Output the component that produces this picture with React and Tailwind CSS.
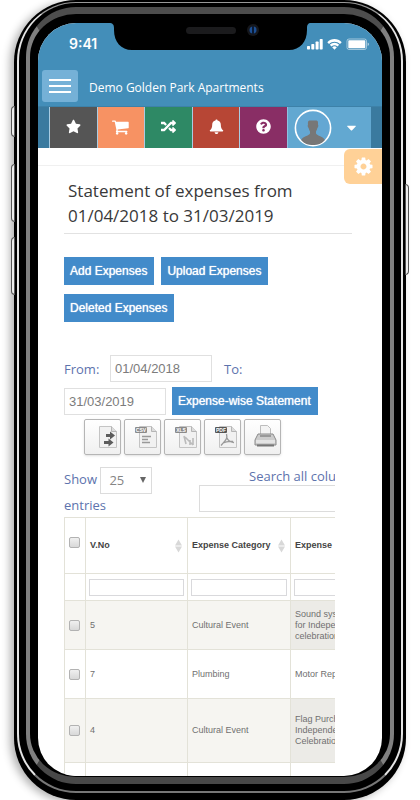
import { FaStar, FaRandom, FaQuestionCircle, FaCaretDown } from 'react-icons/fa';

function CartIcon() {
    return (
        <svg width="18" height="18" viewBox="0 0 1792 1792" fill="currentColor" aria-hidden="true">
            <path d="M640 1536q0 52-38 90t-90 38-90-38-38-90 38-90 90-38 90 38 38 90zm896 0q0 52-38 90t-90 38-90-38-38-90 38-90 90-38 90 38 38 90zm128-1088v512q0 24-16.5 42.5t-40.5 21.5l-1044 122q13 60 13 70 0 16-24 64h920q26 0 45 19t19 45-19 45-45 19h-1024q-26 0-45-19t-19-45q0-11 8-31.5t16-36 21.5-40 15.5-29.5l-177-823h-204q-26 0-45-19t-19-45 19-45 45-19h256q16 0 28.5 6.5t19.5 15.5 13 24.5 8 26 5.5 29.5 4.5 26h1201q26 0 45 19t19 45z" />
        </svg>
    );
}

function BellIcon({ size }) {
    return (
        <svg width={size} height={size} viewBox="0 0 16 16" fill="currentColor" aria-hidden="true">
            <path d="M8 0.500C8.700 0.500 9.200 1 9.100 1.700C11.500 2.200 12.600 4.200 12.600 6.200C12.600 9.500 13.500 11 15.200 12.300C15.200 13 14.700 13.400 14.100 13.400H1.900C1.300 13.400 0.800 13 0.800 12.300C2.500 11 3.400 9.500 3.400 6.200C3.400 4.200 4.500 2.200 6.900 1.700C6.800 1 7.300 0.500 8 0.500ZM6 14H10C10 15.200 9.100 16 8 16C6.900 16 6 15.200 6 14Z" />
        </svg>
    );
}

function CogIcon({ size }) {
    return (
        <svg width={size} height={size} viewBox="0 0 1792 1792" fill="currentColor" aria-hidden="true">
            <path d="M1152 896q0-106-75-181t-181-75-181 75-75 181 75 181 181 75 181-75 75-181zm512-109v222q0 12-8 23t-20 13l-185 28q-19 54-39 91 35 50 107 138 10 12 10 25t-9 23q-27 37-99 108t-94 71q-12 0-26-9l-138-108q-44 23-91 38-16 136-29 186-7 28-36 28h-222q-14 0-24.5-8.5t-11.5-21.5l-28-184q-49-16-90-37l-141 107q-10 9-25 9-14 0-25-11-126-114-165-168-7-10-7-23 0-12 8-23 15-21 51-66.5t54-70.5q-27-50-41-99l-183-27q-13-2-21-12.5t-8-23.5v-222q0-12 8-23t19-13l186-28q14-46 39-92-40-57-107-138-10-12-10-24 0-10 9-23 26-36 98.5-107.5t94.5-71.5q13 0 26 10l138 107q44-23 91-38 16-136 29-186 7-28 36-28h222q14 0 24.5 8.5t11.5 21.5l28 184q49 16 90 37l142-107q9-9 24-9 13 0 25 10 129 119 165 170 7 8 7 22 0 12-8 23-15 21-51 66.5t-54 70.5q26 50 41 98l183 28q13 2 21 12.5t8 23.5z" />
        </svg>
    );
}

const shortcuts = [
    { label: 'Favourites', icon: FaStar, color: 'bg-[#555555]' },
    { label: 'Cart', icon: CartIcon, color: 'bg-[#f79263]' },
    { label: 'Switch', icon: FaRandom, color: 'bg-[#2e8965]' },
    { label: 'Notifications', icon: BellIcon, color: 'bg-[#b74635]' },
    { label: 'Help', icon: FaQuestionCircle, color: 'bg-[#892e65]' },
];

const expenses = [
    { no: '5', category: 'Cultural Event', expense: 'Sound system\nfor Independence\ncelebration', height: 'h-[49px]' },
    { no: '7', category: 'Plumbing', expense: 'Motor Repairing', height: 'h-[49px]' },
    { no: '4', category: 'Cultural Event', expense: 'Flag Purchase\nIndependence\nCelebration', height: 'h-16' },
    { no: '', category: '', expense: '', height: 'h-16' },
];

function Notch() {
    return (
        <svg className="absolute top-0 left-1/2 -translate-x-1/2" width="202" height="28" viewBox="0 0 202 28" aria-hidden="true">
            <path d="M0 0H202C199 0 198 2 198 5V7C198 19 191 27 180 27H23C12 27 5 19 5 7V5C5 2 4 0 0 0Z" fill="#000" />
            <rect x="77" y="4" width="50" height="7" rx="3.5" fill="#1b1b1d" />
            <circle cx="144" cy="7" r="6" fill="#15171c" />
            <circle cx="144" cy="7" r="3.5" fill="#1c4f94" />
            <rect x="143" y="3" width="2" height="8" fill="#0b1a33" />
        </svg>
    );
}

function StatusBar() {
    return (
        <div className="flex h-[47px] items-start justify-between pt-[11px] pr-3 pl-[31px] font-['Inter',sans-serif] text-sm font-semibold text-white">
            <span>9:41</span>
            <svg className="mt-1" width="63" height="12" viewBox="0 0 63 12" fill="#fff" aria-hidden="true">
                <rect x="0" y="8" width="3" height="3.500" rx="0.700" />
                <rect x="4.300" y="6" width="3" height="5.500" rx="0.700" />
                <rect x="8.600" y="3.500" width="3" height="8" rx="0.700" />
                <rect x="12.700" y="1" width="3" height="10.500" rx="0.700" />
                <path d="M20.300 4.300C24.300 -0.100 30.700 -0.100 34.700 4.300L33 6C29.800 2.900 25.200 2.900 22 6Z" />
                <path d="M22.800 6.800C25.500 4.100 29.500 4.100 32.200 6.800L30.500 8.500C28.600 6.900 26.400 6.900 24.500 8.500Z" />
                <path d="M25.200 9.300C26.700 8 28.300 8 29.800 9.300L27.500 11.700Z" />
                <rect x="40" y="1" width="19.500" height="10.500" rx="2" fill="none" stroke="#fff" strokeOpacity="0.5" />
                <rect x="41.300" y="2.300" width="17" height="8" rx="0.800" />
                <path d="M60.600 4.500C62.500 5 62.500 7.500 60.600 8Z" fillOpacity="0.6" />
            </svg>
        </div>
    );
}

function Avatar() {
    return (
        <svg width="38" height="38" viewBox="0 0 38 38" aria-hidden="true">
            <circle cx="19" cy="19" r="17.600" fill="#64a7d3" stroke="#fff" strokeWidth="1.600" />
            <path d="M14 15.500C13.600 10 15.500 11.600 19 11.600C22.500 11.600 24.400 10 24 15.500C24.600 16 24.300 18.500 23.400 19C23 21 22.200 22 22 22.600V24.600C23 27 29.500 27.500 30.800 31C27 35.500 23 36 19 36C15 36 11 35.500 7.200 31C8.500 27.500 15 27 16 24.600V22.600C15.800 22 15 21 14.600 19C13.700 18.500 13.400 16 14 15.500Z" fill="#777" />
        </svg>
    );
}

function PageOutline() {
    return (
        <>
            <path d="M7.500 3.500H19.500L24.500 8.500V24.500H7.500Z" fill="#f1f1f1" stroke="#c4c4c4" />
            <path d="M19.500 3.500V8.500H24.500" fill="#ddd" stroke="#b5b5b5" />
        </>
    );
}

function FormatTag({ children, fill = '#8a8a8a' }) {
    return (
        <>
            <rect x="3" y="4" width="12" height="6" rx="1" fill={fill} />
            <text x="9" y="9" textAnchor="middle" fontSize="5" fontWeight="700" fill="#fff" fontFamily="Liberation Sans, sans-serif">{children}</text>
        </>
    );
}

const exportIcons = [
    {
        label: 'Copy',
        art: (
            <>
                <PageOutline />
                <path d="M14 11H18V8.500L23 12.500L18 16.500V14H14ZM12 18H16.500V15.500L21.500 19.500L16.500 23.500V21H12Z" fill="#5c5c5c" />
            </>
        ),
    },
    {
        label: 'CSV',
        art: (
            <>
                <PageOutline />
                <FormatTag>CSV</FormatTag>
                <path d="M10 13.500H19M10 16.500H16M10 19.500H18" stroke="#999" strokeWidth="1.500" />
            </>
        ),
    },
    {
        label: 'Excel',
        art: (
            <>
                <PageOutline />
                <FormatTag>XLS</FormatTag>
                <path d="M12 13L14 21M13 14L21 22M18 22V17M21 22V15" fill="none" stroke="#bbb" strokeWidth="1.600" />
            </>
        ),
    },
    {
        label: 'PDF',
        art: (
            <>
                <PageOutline />
                <FormatTag fill="#555">PDF</FormatTag>
                <path d="M14.500 11C15.500 15 15 16 9 22.500M15 15C16 18 18 19 22 19.500M11 20C14 18.500 17 18 21 18.500" fill="none" stroke="#999" strokeWidth="1.300" />
            </>
        ),
    },
    {
        label: 'Print',
        art: (
            <>
                <path d="M8.500 13V2.500H15.500L18.500 5.500V13Z" fill="#f3f3f3" stroke="#bdbdbd" />
                <path d="M6 11H21L24 17V22H3V17Z" fill="#ccc" stroke="#8b8b8b" />
                <path d="M8 13H19" stroke="#666" />
                <rect x="4" y="17" width="19" height="3" fill="#e4e4e4" />
                <path d="M5 22.500H22" stroke="#777" strokeWidth="2" />
            </>
        ),
    },
];

function BlueButton({ children }) {
    return (
        <button type="button" className="h-7 bg-[#428bca] pr-[7px] pl-1.5 text-xs whitespace-nowrap text-white [text-shadow:0_0_1px_#fff]">
            {children}
        </button>
    );
}

function Checkbox({ label }) {
    return (
        <input
            type="checkbox"
            aria-label={label}
            className="ml-1 block size-[11px] appearance-none rounded-xs border border-[#b2b2b2] bg-linear-to-b from-[#f0f0f0] to-[#d8d8d8]"
        />
    );
}

function SortIcon() {
    return (
        <svg className="mr-0.5 shrink-0" width="7" height="14" viewBox="0 0 7 14" fill="#d8d8d8" aria-hidden="true">
            <path d="M3.500 0.500L7 6.500H0ZM3.500 13.500L7 7.500H0Z" />
        </svg>
    );
}

function ExpenseTable() {
    const headings = ['V.No', 'Expense Category', 'Expense'];

    return (
        <table className="w-[329px] table-fixed border-collapse text-[9px] leading-[11px] text-[#707070] [&_td]:border [&_td]:border-[#e3e2d8] [&_th]:border [&_th]:border-[#e3e2d8]">
            <colgroup>
                <col className="w-[21px]" />
                <col className="w-[102px]" />
                <col className="w-[103px]" />
                <col className="w-[103px]" />
            </colgroup>
            <thead>
                <tr className="h-14 text-left text-[#444]">
                    <th className="pb-1.5"><Checkbox label="Select all" /></th>
                    {headings.map((heading) => (
                        <th key={heading} className="pr-[3px] pl-1">
                            <div className="flex items-center justify-between whitespace-nowrap">
                                {heading}
                                <SortIcon />
                            </div>
                        </th>
                    ))}
                </tr>
                <tr className="h-[27px]">
                    <td />
                    {headings.map((heading) => (
                        <td key={heading} className="px-[3px]">
                            <input aria-label={`Filter ${heading}`} className="block h-[17px] w-full border border-[#d9d9dc] bg-white" />
                        </td>
                    ))}
                </tr>
            </thead>
            <tbody>
                {expenses.map((row) => (
                    <tr key={row.no} className={`odd:bg-[#f6f5f1] last:bg-white ${row.height}`}>
                        <td>{row.no && <Checkbox label={`Select voucher ${row.no}`} />}</td>
                        <td className="px-1">{row.no}</td>
                        <td className="px-1">{row.category}</td>
                        <td className={row.no === '7' || !row.no ? 'px-1' : 'bg-[#ecebe7] px-1 whitespace-pre-line'}>{row.expense}</td>
                    </tr>
                ))}
            </tbody>
        </table>
    );
}

function Screen() {
    return (
        <div className="relative h-full overflow-hidden rounded-[38px] bg-white font-['Liberation_Sans',Arial,sans-serif]">
            <Notch />

            <header className="bg-[#438eb9]">
                <StatusBar />
                <div className="flex h-9 items-start pl-1">
                    <button type="button" aria-label="Menu" className="flex h-8 w-9 shrink-0 flex-col items-center justify-center gap-1 rounded-[3px] bg-[#75b1d7]">
                        <span className="h-0.5 w-[22px] bg-white" />
                        <span className="h-0.5 w-[22px] bg-white" />
                        <span className="h-0.5 w-[22px] bg-white" />
                    </button>
                    <a href="#home" className="ml-[11px] pt-2 font-['Open_Sans',sans-serif] text-xs leading-5 whitespace-nowrap text-white">
                        Demo Golden Park Apartments
                    </a>
                </div>
            </header>

            <nav className="flex h-[42px] border-t border-[#3d81a8] bg-[#3a7a9f] px-[11px]">
                {shortcuts.map(({ label, icon: Icon, color }) => (
                    <a key={label} href={`#${label.toLowerCase()}`} aria-label={label} className={`flex flex-1 items-center justify-center border-l border-[#a9cce2] pb-0.5 text-white ${color}`}>
                        <Icon size={15} />
                    </a>
                ))}
                <button type="button" aria-label="Account" className="flex w-[84px] shrink-0 items-center justify-between border-l border-[#8fc0de] bg-[#62a8d1] pr-3 pl-1.5 text-white">
                    <Avatar />
                    <FaCaretDown size={15} />
                </button>
            </nav>

            <button type="button" aria-label="Settings" className="absolute top-[126px] right-0 flex h-[35px] w-[38px] items-center justify-center rounded-l-md bg-[#ffd197] text-white">
                <CogIcon size={21} />
            </button>

            <main className="mt-[17px] border-t border-[#f0f0f0] pl-[26px]">
                <h1 className="mr-[30px] border-b border-[#e2e2e2] pt-3 pr-10 pb-[5px] pl-1 font-['Open_Sans',sans-serif] text-[17px] leading-[25px] text-[#393939]">
                    Statement of expenses from 01/04/2018 to 31/03/2019
                </h1>

                <div className="mt-[23px] flex flex-wrap gap-x-[7px] gap-y-[9px] pr-[30px]">
                    <BlueButton>Add Expenses</BlueButton>
                    <BlueButton>Upload Expenses</BlueButton>
                    <BlueButton>Deleted Expenses</BlueButton>
                </div>

                <form className="mt-[33px] mr-[47px] font-['Open_Sans',sans-serif] text-[13px] leading-5 text-[#5d73ad]">
                    <div className="flex items-center">
                        <label htmlFor="from" className="w-[46px]">From:</label>
                        <input id="from" defaultValue="01/04/2018" className="h-[27px] w-[102px] border border-[#e0e0e0] px-1 font-['Liberation_Sans',Arial,sans-serif] text-[#7c7c7c]" />
                        <label htmlFor="to" className="ml-3">To:</label>
                    </div>
                    <div className="mt-[5px] flex items-center gap-1.5">
                        <input id="to" defaultValue="31/03/2019" className="h-[27px] w-[102px] border border-[#e0e0e0] px-1 font-['Liberation_Sans',Arial,sans-serif] text-[#7c7c7c]" />
                        <span className="flex font-['Liberation_Sans',Arial,sans-serif]">
                            <BlueButton>Expense-wise Statement</BlueButton>
                        </span>
                    </div>
                </form>

                <div className="mt-1 ml-5 flex gap-[3px]">
                    {exportIcons.map(({ label, art }) => (
                        <button key={label} type="button" aria-label={label} className="flex h-9 w-[37px] items-center justify-end rounded-xs border border-[#b5b5b5] bg-linear-to-b from-white to-[#f0f0f0] shadow-sm">
                            <svg width="28" height="28" viewBox="0 0 28 28" aria-hidden="true">{art}</svg>
                        </button>
                    ))}
                </div>

                <div className="mt-3 mr-[47px] overflow-hidden">
                    <div className="flex font-['Open_Sans',sans-serif] text-[13px] leading-5 text-[#5d73ad]">
                        <label className="w-[135px] shrink-0 leading-[23px]">
                            Show{' '}
                            <span className="relative inline-block">
                                <select className="h-[27px] w-[52px] appearance-none border border-[#dcdcdc] bg-white px-2 align-middle text-[#858585]" defaultValue="25">
                                    <option>25</option>
                                    <option>50</option>
                                </select>
                                <svg className="absolute top-2.5 right-1.5" width="6" height="6" viewBox="0 0 6 6" fill="#666" aria-hidden="true">
                                    <path d="M0 0H6L3 6Z" />
                                </svg>
                            </span>
                            <br />
                            entries
                        </label>
                        <label className="w-[194px] shrink-0">
                            <span className="block pl-[50px] leading-[18px] whitespace-nowrap">Search all columns:</span>
                            <input className="block h-[27px] w-full border border-[#dcdcdc]" />
                        </label>
                    </div>
                    <ExpenseTable />
                </div>
            </main>
        </div>
    );
}

export default function App() {
    return (
        <div className="relative h-screen overflow-hidden bg-white px-3.5">
            {/* Phone body, from the outer rim to the bezel */}
            <div className="relative h-full rounded-[62px] bg-black px-[3px] pt-0.5 pb-[7px] shadow-[-4px_2px_8px_rgba(0,0,0,0.3)]">
                {/* Side keys */}
                <div className="absolute top-[106px] -left-[3px] h-[31px] w-1 rounded-l-sm border border-[#555] bg-[#eee]" />
                <div className="absolute top-[164px] -left-[3px] h-[58px] w-1 rounded-l-sm border border-[#555] bg-[#eee]" />
                <div className="absolute top-[237px] -left-[3px] h-[58px] w-1 rounded-l-sm border border-[#555] bg-[#eee]" />
                <div className="absolute top-[184px] -right-[3px] h-[91px] w-1 rounded-r-sm border border-[#555] bg-[#eee]" />

                <div className="h-full rounded-[59px] border-x-2 border-t border-b-2 border-x-[#e5e5e5] border-t-[#999] border-b-[#777] px-[7px] pt-1 pb-[7px]">
                    <div className="h-full rounded-[50px] border-x-4 border-t-[7px] border-b-[7px] border-x-[#808080] border-t-[#4d4d4d] border-b-[#484848] px-2 pt-[9px] pb-px">
                        <Screen />
                    </div>
                </div>
            </div>
        </div>
    );
}
